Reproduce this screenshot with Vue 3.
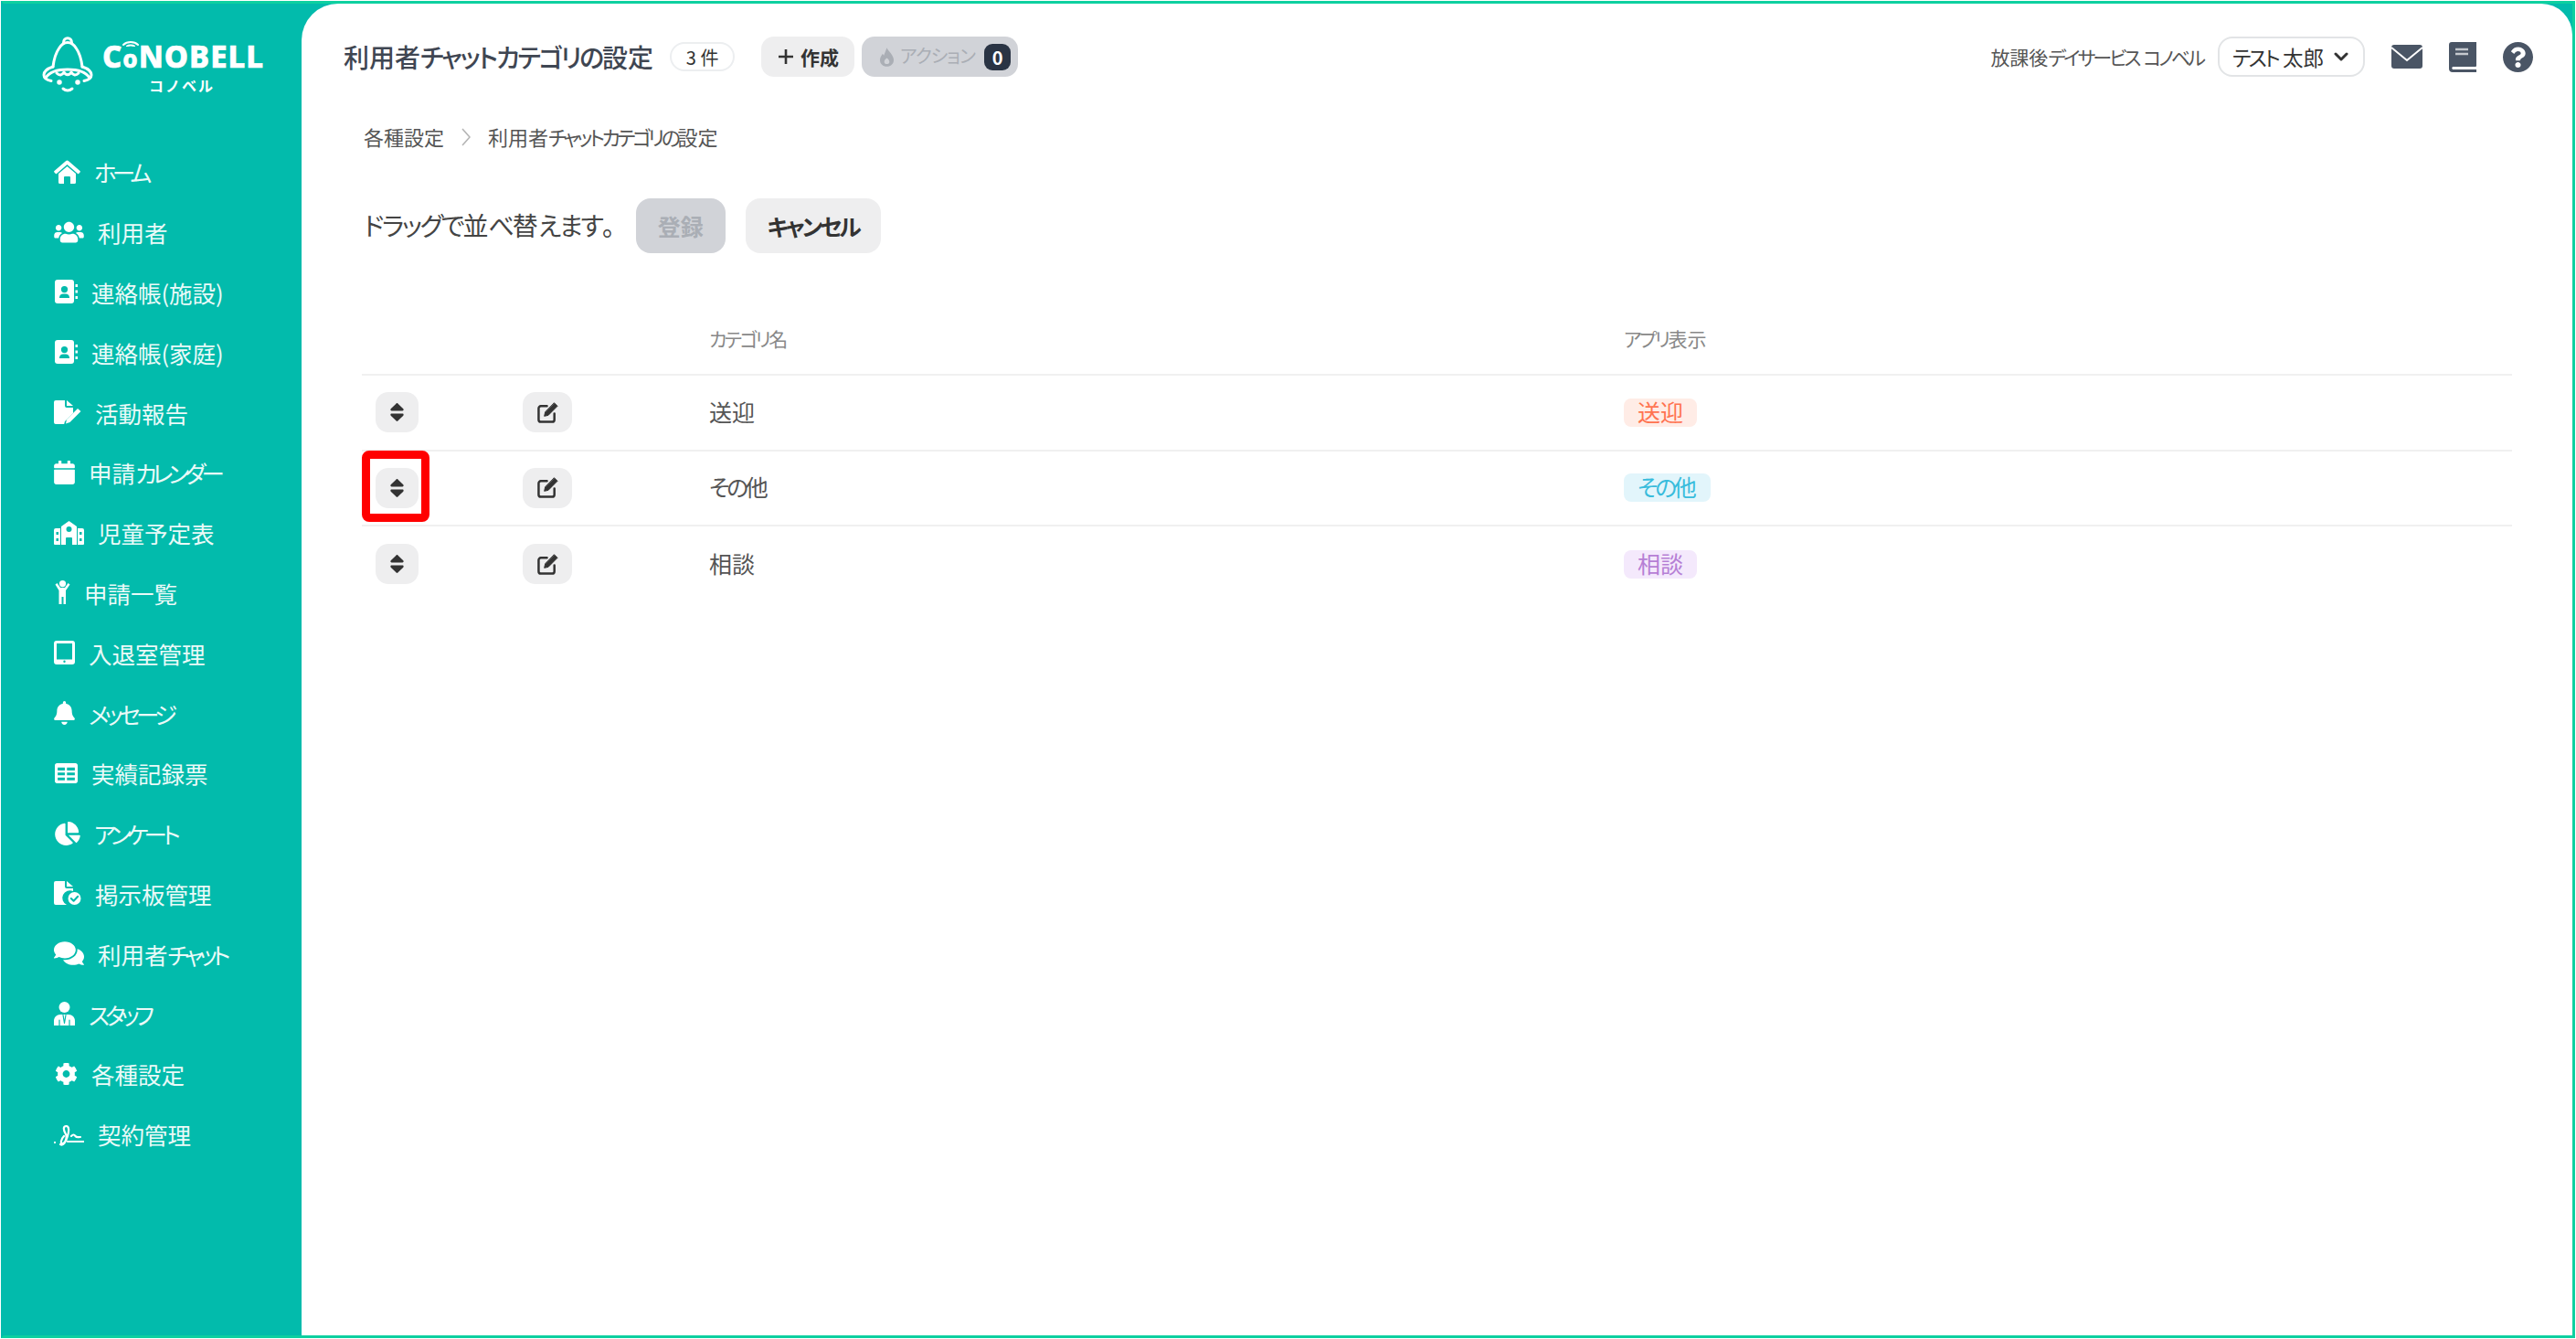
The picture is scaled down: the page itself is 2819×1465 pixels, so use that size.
<script setup>
import { h } from 'vue'

const J = (props) =>
  props.t.split(/([\u3040-\u30ff]+)/).filter(Boolean).map((s) =>
    h('span', { class: /[\u3040-\u30ff]/.test(s) ? 'k' : null }, s))
J.props = ['t']

const T = '#02bbac'
const book = ['M3 0h15a3 3 0 0 1 3 3v20a3 3 0 0 1-3 3H3a3 3 0 0 1-3-3V3a3 3 0 0 1 3-3z', 'M22.5 5h2.5v3h-2.5zM22.5 11.5h2.5v3h-2.5zM22.5 18h2.5v3h-2.5z']
const person = [{ d: 'M10.5 7a3.6 3.6 0 1 1 0 7.2a3.6 3.6 0 0 1 0-7.2zM5 19.5c0-2.7 2-4 4-4h3c2 0 4 1.3 4 4v.5H5z', f: T }]
const nav = [
  { label: 'ホーム', w: 29, h: 26, vb: '0 0 29 26', p: ['M14.5 0.5a2 2 0 0 1 1.300.5L28.500 12a1 1 0 0 1 .1 1.400l-1.200 1.400a1 1 0 0 1-1.400.1L14.500 5 3 14.900a1 1 0 0 1-1.400-.1L.4 13.400A1 1 0 0 1 .5 12L13.200 1a2 2 0 0 1 1.300-.5z', 'M14.500 7L24 15v9.500a1.500 1.500 0 0 1-1.500 1.500H18v-7a1 1 0 0 0-1-1h-5a1 1 0 0 0-1 1v7H6.500A1.500 1.500 0 0 1 5 24.500V15z'] },
  { label: '利用者', w: 33, h: 26, vb: '0 0 640 512', p: ['M96 224c35.3 0 64-28.7 64-64s-28.7-64-64-64-64 28.7-64 64 28.7 64 64 64zm448 0c35.3 0 64-28.7 64-64s-28.7-64-64-64-64 28.7-64 64 28.7 64 64 64zm32 32h-64c-17.6 0-33.5 7.1-45.1 18.6 40.3 22.1 68.9 62 75.1 109.4h66c17.7 0 32-14.3 32-32v-32c0-35.3-28.7-64-64-64zm-256 0c61.9 0 112-50.1 112-112S381.9 32 320 32 208 82.1 208 144s50.1 112 112 112zm76.8 32h-8.3c-20.8 10-43.9 16-68.5 16s-47.6-6-68.5-16h-8.3C179.6 288 128 339.6 128 403.2V432c0 26.5 21.5 48 48 48h288c26.5 0 48-21.5 48-48v-28.8c0-63.6-51.6-115.2-115.2-115.2zm-223.7-13.4C161.5 263.1 145.6 256 128 256H64c-35.3 0-64 28.7-64 64v32c0 17.7 14.3 32 32 32h65.9c6.3-47.4 34.9-87.3 75.2-109.4z'] },
  { label: '連絡帳(施設)', w: 25, h: 26, ml: 2, vb: '0 0 25 26', p: book, c: person },
  { label: '連絡帳(家庭)', w: 25, h: 26, ml: 2, vb: '0 0 25 26', p: book, c: person },
  { label: '活動報告', w: 30, h: 26, vb: '0 0 30 26', p: ['M2 0h10v6a2 2 0 0 0 2 2h7v6L12 23l-.8 3H2a2 2 0 0 1-2-2V2a2 2 0 0 1 2-2z', 'M14 0l7 6h-7z', 'M26 9l3.5 3-12 12-4.5 1.5 1-4.5z'] },
  { label: '申請カレンダー', w: 23, h: 26, vb: '0 0 448 512', p: ['M12 192h424c6.6 0 12 5.4 12 12v260c0 26.5-21.5 48-48 48H48c-26.5 0-48-21.5-48-48V204c0-6.6 5.4-12 12-12zm436-44v-36c0-26.5-21.5-48-48-48h-48V12c0-6.6-5.4-12-12-12h-40c-6.6 0-12 5.4-12 12v52H160V12c0-6.6-5.4-12-12-12h-40c-6.6 0-12 5.4-12 12v52H48C21.5 64 0 85.5 0 112v36c0 6.6 5.4 12 12 12h424c6.6 0 12-5.4 12-12z'] },
  { label: '児童予定表', w: 33, h: 26, vb: '0 0 33 26', p: ['M2 8h5v18H1a1 1 0 0 1-1-1V10a2 2 0 0 1 2-2zM26 8h5a2 2 0 0 1 2 2v15a1 1 0 0 1-1 1h-6z', 'M16.5 0L25 6v20h-5v-7a1 1 0 0 0-1-1h-5a1 1 0 0 0-1 1v7H8V6z'], c: [{ d: 'M16.5 6a3 3 0 1 1 0 6a3 3 0 0 1 0-6zM2.5 12h2.5v3H2.5zM2.5 19h2.5v3H2.5zM28 12h2.5v3H28zM28 19h2.5v3H28z', f: T }] },
  { label: '申請一覧', w: 17, h: 26, ml: 1, vb: '0 0 17 26', p: ['M8.5 0a3.6 3.6 0 1 1 0 7.2a3.6 3.6 0 0 1 0-7.2z', 'M0.5 4.5l2-1.5 3.5 5h5l3.5-5 2 1.500-4.500 6.500V26H9.500v-8h-2v8H4.500V11z'] },
  { label: '入退室管理', w: 23, h: 26, vb: '0 0 23 26', p: ['M3 0h17a3 3 0 0 1 3 3v20a3 3 0 0 1-3 3H3a3 3 0 0 1-3-3V3a3 3 0 0 1 3-3zM3 3v17.500h17V3zM11.500 21.500a1.200 1.200 0 1 0 0 2.400a1.200 1.200 0 0 0 0-2.400z'], rule: 'evenodd' },
  { label: 'メッセージ', w: 23, h: 26, vb: '0 0 448 512', p: ['M224 512c35.32 0 63.97-28.65 63.97-64H160.03c0 35.35 28.65 64 63.97 64zm215.39-149.71c-19.32-20.76-55.47-51.99-55.47-154.29 0-77.7-54.48-139.9-127.94-155.16V32c0-17.67-14.32-32-31.98-32s-31.98 14.33-31.98 32v20.84C118.56 68.1 64.08 130.3 64.08 208c0 102.3-36.15 133.53-55.47 154.29-6 6.45-8.66 14.16-8.61 21.71.11 16.4 12.98 32 32.1 32h383.8c19.12 0 32-15.6 32.1-32 .05-7.55-2.61-15.27-8.61-21.71z'] },
  { label: '実績記録票', w: 25, h: 22, ml: 1, vb: '0 32 512 448', p: ['M464 32H48C21.49 32 0 53.49 0 80v352c0 26.51 21.49 48 48 48h416c26.51 0 48-21.49 48-48V80c0-26.51-21.49-48-48-48zM224 416H64v-64h160v64zm0-112H64v-64h160v64zm0-112H64v-64h160v64zm224 224H272v-64h176v64zm0-112H272v-64h176v64zm0-112H272v-64h176v64z'] },
  { label: 'アンケート', w: 28, h: 26, ml: 1, vb: '0 0 544 512', p: ['M527.79 288H290.5l158.03 158.03c6.04 6.04 15.98 6.53 22.19.68 38.7-36.46 65.32-85.61 73.13-140.86 1.34-9.46-6.51-17.85-16.06-17.85zm-15.83-64.8C503.72 103.74 408.26 8.28 288.8.04 279.68-.59 272 7.1 272 16.24V240h223.77c9.14 0 16.82-7.68 16.19-16.8zM224 288V50.71c0-9.55-8.39-17.4-17.84-16.06C86.99 51.49-4.1 155.6.14 280.37 4.5 408.51 114.83 513.59 243.03 511.98c50.4-.63 96.97-16.87 135.26-44.03 7.9-5.6 8.42-17.23 1.57-24.08L224 288z'] },
  { label: '掲示板管理', w: 30, h: 26, vb: '0 0 30 26', p: ['M2 0h10v6a2 2 0 0 0 2 2h7v3a8 8 0 0 0-7 15H2a2 2 0 0 1-2-2V2a2 2 0 0 1 2-2z', 'M14 0l7 6h-7z', 'M22.5 12a7 7 0 1 1 0 14a7 7 0 0 1 0-14z'], c: [{ d: 'M18.8 19l2.8 2.8 4.6-5', s: T }] },
  { label: '利用者チャット', w: 33, h: 26, vb: '0 32 576 448', p: ['M416 192c0-88.4-93.1-160-208-160S0 103.6 0 192c0 34.3 14.1 65.9 38 92-13.4 30.2-35.5 54.2-35.8 54.5-2.2 2.3-2.8 5.7-1.5 8.7S4.8 352 8 352c36.6 0 66.9-12.3 88.7-25 32.2 15.7 70.3 25 111.3 25 114.9 0 208-71.6 208-160zm122 220c23.9-26 38-57.7 38-92 0-66.9-53.5-124.2-129.3-148.1.9 6.6 1.3 13.3 1.3 20.1 0 105.9-107.7 192-240 192-10.8 0-21.3-.8-31.7-1.9C207.8 439.6 281.8 480 368 480c41 0 79.1-9.2 111.3-25 21.8 12.7 52.1 25 88.7 25 3.2 0 6.1-1.9 7.3-4.8 1.3-2.9.7-6.3-1.5-8.7-.3-.3-22.4-24.2-35.8-54.5z'] },
  { label: 'スタッフ', w: 23, h: 26, vb: '0 0 23 26', p: ['M11.5 0a6 6 0 1 1 0 12a6 6 0 0 1 0-12z', 'M7 14h9c4 0 7 3 7 7v5H0v-5c0-4 3-7 7-7z'], c: [{ d: 'M6 20v6M17 20v6M10 14.5l1.5 9 1.5-9', s: T, sw: 1.2 }] },
  { label: '各種設定', w: 25, h: 26, ml: 1, vb: '0 0 512 512', p: ['M487.4 315.7l-42.6-24.6c4.3-23.2 4.3-47 0-70.2l42.6-24.6c4.9-2.8 7.1-8.6 5.5-14-11.1-35.6-30-67.8-54.7-94.6-3.8-4.1-10-5.1-14.8-2.3L380.8 110c-17.9-15.4-38.5-27.3-60.8-35.1V25.8c0-5.6-3.9-10.5-9.4-11.7-36.7-8.2-74.3-7.8-109.2 0-5.5 1.2-9.4 6.1-9.4 11.7V75c-22.2 7.9-42.8 19.8-60.8 35.1L88.7 85.5c-4.9-2.8-11-1.9-14.8 2.3-24.7 26.7-43.6 58.9-54.7 94.6-1.7 5.4.6 11.2 5.5 14L67.3 221c-4.3 23.2-4.3 47 0 70.2l-42.6 24.6c-4.9 2.8-7.1 8.6-5.5 14 11.1 35.6 30 67.8 54.7 94.6 3.8 4.1 10 5.1 14.8 2.3l42.6-24.6c17.9 15.4 38.5 27.3 60.8 35.1v49.2c0 5.6 3.9 10.5 9.4 11.7 36.7 8.2 74.3 7.8 109.2 0 5.5-1.2 9.4-6.1 9.4-11.7v-49.2c22.2-7.9 42.8-19.8 60.8-35.1l42.6 24.6c4.9 2.8 11 1.9 14.8-2.3 24.7-26.7 43.6-58.9 54.7-94.6 1.5-5.5-.7-11.3-5.6-14.1zM256 336c-44.1 0-80-35.9-80-80s35.9-80 80-80 80 35.9 80 80-35.9 80-80 80z'] },
  { label: '契約管理', w: 33, h: 26, vb: '0 0 33 26', p: ['M0 21h2v2H0z'], c: [{ d: 'M7 24c3 2 6-2 8-9 1.500-5 2-11-1.500-11S10 8 13 13c1.500 3 0 9-3 10-3 1-3-4 1-8M19 15c2-2 3-2 4.500 0s3 1 5.500 1M15 21h18', s: '#fff', sw: 2.2 }] },
]
const rows = [
  { name: '送迎', cls: 'tag-red' },
  { name: 'その他', cls: 'tag-blue', marked: true },
  { name: '相談', cls: 'tag-purple' },
]
</script>

<template>
  <div class="frame">
    <aside class="side">
      <div class="logo">
        <svg class="bell" viewBox="0 0 80 80" width="80" height="80" fill="none" stroke="#fff" stroke-width="3" stroke-linecap="round" stroke-linejoin="round">
          <path d="M29.500 17c-.5-7 9.500-7 9 0" />
          <path d="M18 43c1-8 3-15 6.500-20 3-5 7-6.500 9.500-6.500s6.500 1.500 9.500 6.500c3.500 5 5.500 12 6.500 20" />
          <path d="M18 43c-6 2-10 5.500-10 9 0 3 3 5.500 8 6.500M50 43c6 2 10 5.500 10 9 0 3-3 5.500-8 6.500" />
          <path d="M10 55c4-6 13-9 24-9s20 3 24 9" />
          <path d="M22 50c3 3 6 2.500 8-1 2 3.500 6 3.500 8 0 2 3.500 5 4 8 1" />
          <path d="M29 67c3 2.500 7 2.500 10 0" />
          <circle cx="25" cy="60" r="2" fill="#fff" stroke-width="1.500" />
          <circle cx="45" cy="60" r="2" fill="#fff" stroke-width="1.500" />
        </svg>
        <div class="logo-text">
          <div class="brand"><span>C</span><span class="o">o<svg class="wifi" viewBox="0 0 20 10" width="20" height="10" fill="none" stroke="#fff" stroke-width="2" stroke-linecap="round"><path d="M2 8c4-4 12-4 16 0M6 9.500c2-1.500 6-1.500 8 0" /></svg></span><span>NOBELL</span></div>
          <div class="kana">コノベル</div>
        </div>
      </div>
      <nav class="nav">
        <a v-for="item in nav" :key="item.label" class="nav-item">
          <span class="ico-wrap">
            <svg :viewBox="item.vb" :width="item.w" :height="item.h" fill="#fff" :class="{ nudge: item.ml }">
              <path v-for="d in item.p" :key="d" :d="d" :fill-rule="item.rule" />
              <template v-if="item.c">
                <path v-for="x in item.c" :key="x.d" :d="x.d" :fill="x.f || 'none'" :stroke="x.s || 'none'" :stroke-width="x.sw || 2" stroke-linecap="round" stroke-linejoin="round" />
              </template>
            </svg>
          </span>
          <span><J :t="item.label" /></span>
        </a>
      </nav>
    </aside>

    <main class="main">
      <header class="top">
        <div class="top-left">
          <h1 class="title"><J t="利用者チャットカテゴリの設定" /></h1>
          <span class="count">3 件</span>
          <button class="btn create">
            <svg viewBox="0 0 20 20" width="20" height="20" fill="none" stroke="#333" stroke-width="2.600"><path d="M10 2v16M2 10h16" /></svg>
            作成
          </button>
          <button class="btn action">
            <svg viewBox="0 0 16 22" width="15" height="21" fill="#aaaeb5"><path fill-rule="evenodd" d="M8 0c1 3 3 4 5 7 2 3 3 5 3 7.500C16 19 12.500 22 8 22S0 19 0 14.500C0 11 2 9 3 7l1.500 2C5.500 6 7 3 8 0zM8 12c-2 1.500-3 3-3 4.500C5 18 6.300 19 8 19s3-1 3-2.500C11 15 10 13.500 8 12z" /></svg>
            <span class="action-label"><J t="アクション" /></span>
            <b class="zero">0</b>
          </button>
        </div>
        <div class="top-right">
          <span class="org"><J t="放課後デイサービス コノベル" /></span>
          <div class="select">
            <span><J t="テスト 太郎" /></span>
            <svg viewBox="0 0 16 10" width="16" height="10" fill="none" stroke="#333" stroke-width="3" stroke-linecap="round" stroke-linejoin="round"><path d="M2 2l6 6 6-6" /></svg>
          </div>
          <svg class="ic-mail" viewBox="0 0 34 26" width="34" height="26">
            <rect width="34" height="26" rx="3" fill="#4a5565" />
            <path d="M0 3l17 14L34 3" fill="none" stroke="#fff" stroke-width="2" />
          </svg>
          <svg class="ic-book" viewBox="0 0 30 33" width="30" height="33">
            <path d="M3 0h27v26a1 1 0 0 1-1 1H4a2 2 0 0 0 0 3h26v3H4a4 4 0 0 1-4-4V3a3 3 0 0 1 3-3z" fill="#4a5565" />
            <path d="M7 8h14M7 13h14" stroke="#c5c9cf" stroke-width="2.500" />
          </svg>
          <svg class="ic-help" viewBox="8 8 496 496" width="33" height="33" fill="#4a5565">
            <path d="M504 256c0 136.997-111.043 248-248 248S8 392.997 8 256C8 119.083 119.043 8 256 8s248 111.083 248 248zM262.655 90c-54.497 0-89.255 22.957-116.549 63.758-3.536 5.286-2.353 12.415 2.715 16.258l34.699 26.31c5.205 3.947 12.621 3.008 16.665-2.122 17.864-22.658 30.113-35.797 57.303-35.797 20.429 0 45.698 13.148 45.698 32.958 0 14.976-12.363 22.667-32.534 33.976C247.128 238.528 216 254.941 216 296v4c0 6.627 5.373 12 12 12h56c6.627 0 12-5.373 12-12v-1.333c0-28.462 83.186-29.647 83.186-106.667 0-58.002-60.165-102-116.531-102zM256 338c-25.365 0-46 20.635-46 46 0 25.364 20.635 46 46 46s46-20.636 46-46c0-25.365-20.635-46-46-46z" />
          </svg>
        </div>
      </header>

      <div class="crumbs">
        <span class="lift">各種設定</span>
        <svg viewBox="0 0 10 20" width="10" height="20" fill="none" stroke="#b5b5b5" stroke-width="1.500"><path d="M1 1l8 9-8 9" /></svg>
        <span class="lift"><J t="利用者チャットカテゴリの設定" /></span>
      </div>

      <div class="tools">
        <span class="hint"><J t="ドラッグで並べ替えます。" /></span>
        <button class="btn big disabled">登録</button>
        <button class="btn big cancel"><J t="キャンセル" /></button>
      </div>

      <section class="table">
        <div class="row head">
          <span></span>
          <span></span>
          <span class="lift"><J t="カテゴリ名" /></span>
          <span class="lift"><J t="アプリ表示" /></span>
        </div>
        <div v-for="r in rows" :key="r.name" class="row">
          <div class="cell-drag">
            <button class="sq drag">
              <svg viewBox="16 56 288 400" width="15" height="20" fill="#333"><path d="M41 288h238c21.4 0 32.1 25.9 17 41L177 448c-9.400 9.400-24.600 9.400-33.900 0L24 329c-15.100-15.100-4.400-41 17-41zm255-105L177 64c-9.400-9.400-24.600-9.400-33.900 0L24 183c-15.100 15.100-4.400 41 17 41h238c21.400 0 32.100-25.900 17-41z" /></svg>
            </button>
          </div>
          <div>
            <button class="sq edit">
              <svg viewBox="0 0 24 24" width="23" height="23" fill="none" stroke="#333" stroke-width="2.600" stroke-linecap="round" stroke-linejoin="round">
                <path d="M11 4.500H4a2.500 2.500 0 0 0-2.500 2.500v13A2.500 2.500 0 0 0 4 22.500h13a2.500 2.500 0 0 0 2.500-2.500v-7" />
                <path d="M19.500 1L23 4.500 12.500 15 8 16l1-4.500z" fill="#333" stroke-width="1" />
              </svg>
            </button>
          </div>
          <div class="name lift"><J :t="r.name" /></div>
          <div><span class="tag" :class="r.cls"><J :t="r.name" /></span></div>
          <div v-if="r.marked" class="marker"></div>
        </div>
      </section>
    </main>
  </div>
</template>

<style>
html, body { margin: 0; background: #fff; }
.k { letter-spacing: var(--k, -0.1em); }
</style>

<style scoped>
* { box-sizing: border-box; }
.frame {
  margin: 1px;
  width: 2817px;
  height: 1463px;
  border: 3px solid #0dd0a0;
  border-left-color: #02bbac;
  background: #02bbac;
  display: flex;
  overflow: hidden;
  font-family: "Noto Sans CJK JP", "Noto Sans", sans-serif;
  font-feature-settings: "palt";
}
.side { width: 326px; flex: none; color: #eafaf8; }
.logo { height: 151px; padding: 26px 0 0 36px; display: flex; align-items: flex-start; }
.bell { flex: none; }
.logo-text { margin: 15px 0 0 -8px; width: 174px; text-align: center; }
.brand {
  font-family: "Noto Sans", sans-serif;
  font-weight: 800;
  font-size: 33px;
  line-height: 34px;
  color: #fff;
  letter-spacing: 1px;
  -webkit-text-stroke: 0.6px #fff;
  display: flex;
  align-items: baseline;
  white-space: nowrap;
}
.o { position: relative; font-size: 26px; }
.wifi { position: absolute; left: -1px; top: -6px; }
.kana { font-size: 16px; font-weight: 700; color: #fff; letter-spacing: 2px; line-height: 22px; margin-top: 1px; font-feature-settings: normal; }
.nav { display: flex; flex-direction: column; --k: -0.19em; }
.nav-item {
  height: 65.8px;
  padding-left: 55px;
  display: flex;
  align-items: center;
  gap: 15px;
  font-size: 25.500px;
  white-space: nowrap;
}
.ico-wrap { display: flex; align-items: center; }
.nudge { margin-left: 1px; }

.main {
  flex: 1;
  background: #fff;
  border-radius: 40px 34px 0 0;
  color: #4b4b4b;
  min-width: 0;
}
.top {
  height: 116px;
  padding: 0 43px 0 46px;
  display: flex;
  align-items: center;
  justify-content: space-between;
}
.top-left, .top-right { display: flex; align-items: center; }
.title { margin: 0 18px 0 0; font-size: 28px; font-weight: 500; color: #3f4652; white-space: nowrap; --k: -0.08em; }
.count {
  width: 71px; height: 32px;
  border: 2px solid #eceef0; border-radius: 16px;
  display: flex; align-items: center; justify-content: center;
  font-size: 20px; color: #333;
  margin-right: 29px;
}
.btn { border: 0; font-family: inherit; font-feature-settings: inherit; display: flex; align-items: center; justify-content: center; white-space: nowrap; padding: 0; }
.create {
  width: 102px; height: 44px; gap: 6px;
  background: #eeeeef; border-radius: 14px;
  font-size: 21px; font-weight: 700; color: #333;
  margin-right: 8px;
}
.action {
  width: 171px; height: 44px;
  background: #d1d3d8; border-radius: 14px;
  font-size: 20px; color: #aaaeb5;
  gap: 7px;
  justify-content: flex-start;
  padding-left: 20px;
  --k: -0.05em;
}
.action-label { padding-bottom: 3px; }
.zero {
  margin-left: auto; margin-right: 8px;
  width: 29px; height: 29px;
  background: #2a3444; border-radius: 9px;
  color: #fff; font-size: 20px; font-weight: 700;
  display: flex; align-items: center; justify-content: center;
}
.org { font-size: 21px; color: #555; white-space: nowrap; margin-right: 16px; --k: -0.14em; }
.select {
  width: 161px; height: 44px;
  border: 2px solid #e2e4e6; border-radius: 16px;
  display: flex; align-items: center; justify-content: space-between;
  padding: 0 16px 0 14px;
  font-size: 22.500px; color: #333; white-space: nowrap;
  --k: -0.12em;
}
.ic-mail { margin-left: 29px; }
.ic-book { margin-left: 29px; }
.ic-help { margin-left: 29px; }

.crumbs {
  height: 60px;
  padding-left: 68px;
  display: flex; align-items: center; gap: 19px;
  font-size: 22px; color: #555;
  --k: -0.155em;
}
.lift { padding-bottom: 3px; }
.tools {
  margin-top: 37px;
  padding-left: 68px;
  display: flex; align-items: center; gap: 22px;
}
.hint { font-size: 28px; color: #444; margin-right: 1px; padding-bottom: 3px; white-space: nowrap; --k: -0.08em; }
.big { height: 60px; border-radius: 16px; font-size: 25px; font-weight: 700; }
.disabled { width: 98px; background: #d1d3d8; color: #aaaeb5; }
.cancel { width: 148px; background: #eeeeef; color: #333; --k: -0.12em; }

.table { margin: 57px 66px 0; }
.row {
  position: relative;
  display: grid;
  grid-template-columns: 176px 204px 1001px 1fr;
  align-items: center;
  height: 82.6px;
  border-bottom: 2px solid #f0f0f0;
}
.row:last-child { border-bottom: 0; }
.head { height: 77px; font-size: 21px; color: #888; --k: -0.12em; }
.cell-drag { padding-left: 15px; }
.sq { border: 0; padding: 0; height: 44px; background: #eeeeef; border-radius: 14px; display: flex; align-items: center; justify-content: center; }
.drag { width: 47px; }
.edit { width: 54px; }
.name { font-size: 25px; color: #555; --k: -0.14em; }
.tag { display: inline-block; height: 31px; line-height: 29px; padding: 0 15px; border-radius: 8px; font-size: 25px; --k: -0.14em; }
.tag-red { background: #ffece6; color: #ff7350; }
.tag-blue { background: #e2f5fb; color: #38bcdc; }
.tag-purple { background: #f4e9fc; color: #b67fd5; }
.marker {
  position: absolute;
  left: 0; top: -1px;
  width: 74px; height: 78px;
  border: 9px solid #ff0000;
  border-radius: 8px;
}
</style>
